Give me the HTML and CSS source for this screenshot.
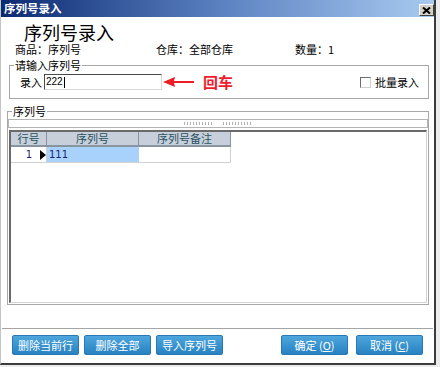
FILE: index.html
```html
<!DOCTYPE html>
<html lang="zh-CN">

<head>
  <meta charset="UTF-8">
  <title>序列号录入</title>
  <link rel="stylesheet" href="styles.css">
</head>

<body>
  <div class="window">
    <div class="titlebar">
      <span class="title">序列号录入</span>
      <span class="close">
        <svg width="9" height="7" viewBox="0 0 9 7"><path d="M1 0.5 L8 6.5 M8 0.5 L1 6.5" stroke="#000" stroke-width="2"/></svg>
      </span>
    </div>

    <div class="main">
      <h1 class="heading">序列号录入</h1>
      <div class="info">
        <span>商品：序列号</span>
        <span>仓库：全部仓库</span>
        <span>数量：1</span>
      </div>

      <fieldset class="group group-input">
        <legend>请输入序列号</legend>
        <div class="entry">
          <span class="entry-label">录入</span>
          <div class="textbox">222<span class="caret"></span></div>
          <svg class="arrow" width="31" height="12" viewBox="0 0 31 12">
            <path d="M0 6 L12 1 L11 5 L31 5 L31 7 L11 7 L12 11 Z" fill="#ee1c25"/>
          </svg>
          <span class="hint">回车</span>
          <label class="batch"><span class="check"></span>批量录入</label>
        </div>
      </fieldset>

      <fieldset class="group group-list">
        <legend>序列号</legend>
        <div class="grip"><span></span><span></span></div>
        <div class="grid">
          <div class="grid-head">
            <div class="cell col-no">行号</div>
            <div class="cell col-sn">序列号</div>
            <div class="cell col-note">序列号备注</div>
          </div>
          <div class="grid-row">
            <div class="cell col-no">1
              <svg class="pointer" width="6" height="10" viewBox="0 0 6 10"><path d="M0 0 L6 5 L0 10 Z" fill="#000"/></svg>
            </div>
            <div class="cell col-sn current">111</div>
            <div class="cell col-note"></div>
          </div>
        </div>
      </fieldset>
    </div>

    <div class="footer">
      <button class="btn">删除当前行</button>
      <button class="btn">删除全部</button>
      <button class="btn">导入序列号</button>
      <button class="btn btn-ok">确定 (<u>O</u>)</button>
      <button class="btn btn-cancel">取消 (<u>C</u>)</button>
    </div>
  </div>
</body>

</html>
```

FILE: styles.css
```css
body {
  margin: 0;
  background: #ececec;
  font-family: "Noto Sans CJK SC", sans-serif;
  color: #000;
}

.window {
  width: 436px;
  height: 365px;
  box-sizing: border-box;
  background: #fff;
  border-left: 1px solid #c4c4c4;
  border-right: 2px solid #3c3c3c;
  border-bottom: 2px solid #3c3c3c;
  display: flex;
  flex-direction: column;
}

.titlebar {
  flex: none;
  height: 17px;
  box-sizing: border-box;
  padding: 2px 0 0 3px;
  display: flex;
  align-items: flex-start;
  justify-content: space-between;
  background: linear-gradient(to right, #0c2a72, #5a80c0 50%, #a8caf0);
}

.title {
  color: #fff;
  font-weight: bold;
  font-size: 11.5px;
  line-height: 13px;
}

.close {
  margin-top: 2px;
  width: 15px;
  height: 12px;
  box-sizing: border-box;
  background: #d4d0c8;
  border: 1px solid;
  border-color: #fff #404040 #404040 #fff;
  display: flex;
  justify-content: center;
  align-items: center;
}

.main {
  flex: 1;
  display: flex;
  flex-direction: column;
  padding-right: 5px;
}

.heading {
  margin: 5px 0 0 23px;
  font-size: 18px;
  line-height: 21px;
  font-weight: normal;
}

.info {
  display: grid;
  grid-template-columns: 141px 139px auto;
  padding-left: 14px;
  font-size: 11px;
  line-height: 13px;
}

.group {
  margin: 0;
  padding: 0;
  min-width: 0;
  border: 1px solid #a8a8a8;
}

.group legend {
  padding: 0 1px;
  font-size: 11px;
  line-height: 12px;
}

.group-input {
  margin: 3px 0 0 8px;
}

.group-input legend {
  margin-left: 4px;
}

.entry {
  display: flex;
  align-items: center;
  height: 16px;
  margin: 3px 0 8px;
  padding: 0 9px 0 10px;
  font-size: 11px;
}

.entry-label {
  margin-right: 2px;
}

.textbox {
  width: 118px;
  height: 16px;
  box-sizing: border-box;
  border: 1px solid;
  border-color: #4a4a4a #d8d8d8 #d8d8d8 #4a4a4a;
  padding-left: 1px;
  font-family: "Liberation Sans", sans-serif;
  font-size: 10px;
  line-height: 14px;
  display: flex;
  align-items: center;
}

.caret {
  width: 1px;
  height: 11px;
  background: #000;
  margin-left: 1px;
}

.arrow {
  margin-left: 1px;
}

.hint {
  margin-left: 9px;
  color: #ee1c2e;
  font-size: 15px;
  font-weight: bold;
  line-height: 16px;
}

.batch {
  margin-left: auto;
  display: flex;
  align-items: center;
}

.check {
  width: 11px;
  height: 11px;
  box-sizing: border-box;
  border: 1px solid;
  border-color: #6c6c6c #d0d0d0 #d0d0d0 #6c6c6c;
  margin-right: 4px;
}

.group-list {
  margin: 6px 0 0 6px;
}

.group-list legend {
  margin-left: 4px;
}

.grip {
  margin-top: 2px;
  height: 7px;
  border: 1px solid #b4b4b4;
  display: flex;
  justify-content: center;
  align-items: center;
  gap: 10px;
}

.grip span {
  width: 29px;
  height: 3px;
  background: repeating-linear-gradient(90deg, #b0b0b0 0 1px, transparent 1px 3px);
}

.grid {
  margin: 2px 1px 1px;
  height: 173px;
  box-sizing: border-box;
  border-style: solid;
  border-width: 2px 1px 1px 2px;
  border-color: #6a6a6a #d4d4d4 #d4d4d4 #6a6a6a;
}

.grid-head,
.grid-row {
  display: flex;
}

.cell {
  box-sizing: border-box;
  font-size: 11px;
}

.col-no {
  width: 36px;
}

.col-sn,
.col-note {
  width: 92px;
}

.grid-head .cell {
  height: 15px;
  line-height: 13px;
  text-align: center;
  color: #2a5262;
  background: #c6cfda;
  border-right: 1px solid #8894a0;
  border-bottom: 2px solid #8894a0;
}

.grid-row .cell {
  height: 16px;
  line-height: 15px;
  border-right: 1px solid #d0d0d0;
  border-bottom: 1px solid #d0d0d0;
}

.grid-row .col-no {
  display: flex;
  align-items: center;
  justify-content: flex-end;
  padding-right: 0;
  color: #1a2270;
  font-family: "DejaVu Sans", sans-serif;
  font-size: 10px;
}

.pointer {
  margin-left: 8px;
}

.grid-row .current {
  background: #a8d2fc;
  border-right-color: #a8d2fc;
  padding-left: 2px;
  color: #1a2270;
  font-family: "DejaVu Sans", sans-serif;
  font-size: 10px;
}

.footer {
  flex: none;
  height: 35px;
  box-sizing: border-box;
  margin: 0 1px;
  padding: 6px 10px 0;
  border-top: 1px solid #a4a4a4;
  display: flex;
  align-items: flex-start;
  gap: 5px;
}

.btn {
  width: 67px;
  height: 20px;
  padding: 0;
  border: 1px solid #2a78b2;
  border-radius: 2px;
  background: linear-gradient(#4ea6dc, #2782c2);
  color: #fff;
  font-family: "Noto Sans CJK SC", sans-serif;
  font-size: 11px;
  line-height: 18px;
}

.btn-ok {
  margin-left: auto;
}

.btn-cancel {
  margin-left: 3px;
}
```
